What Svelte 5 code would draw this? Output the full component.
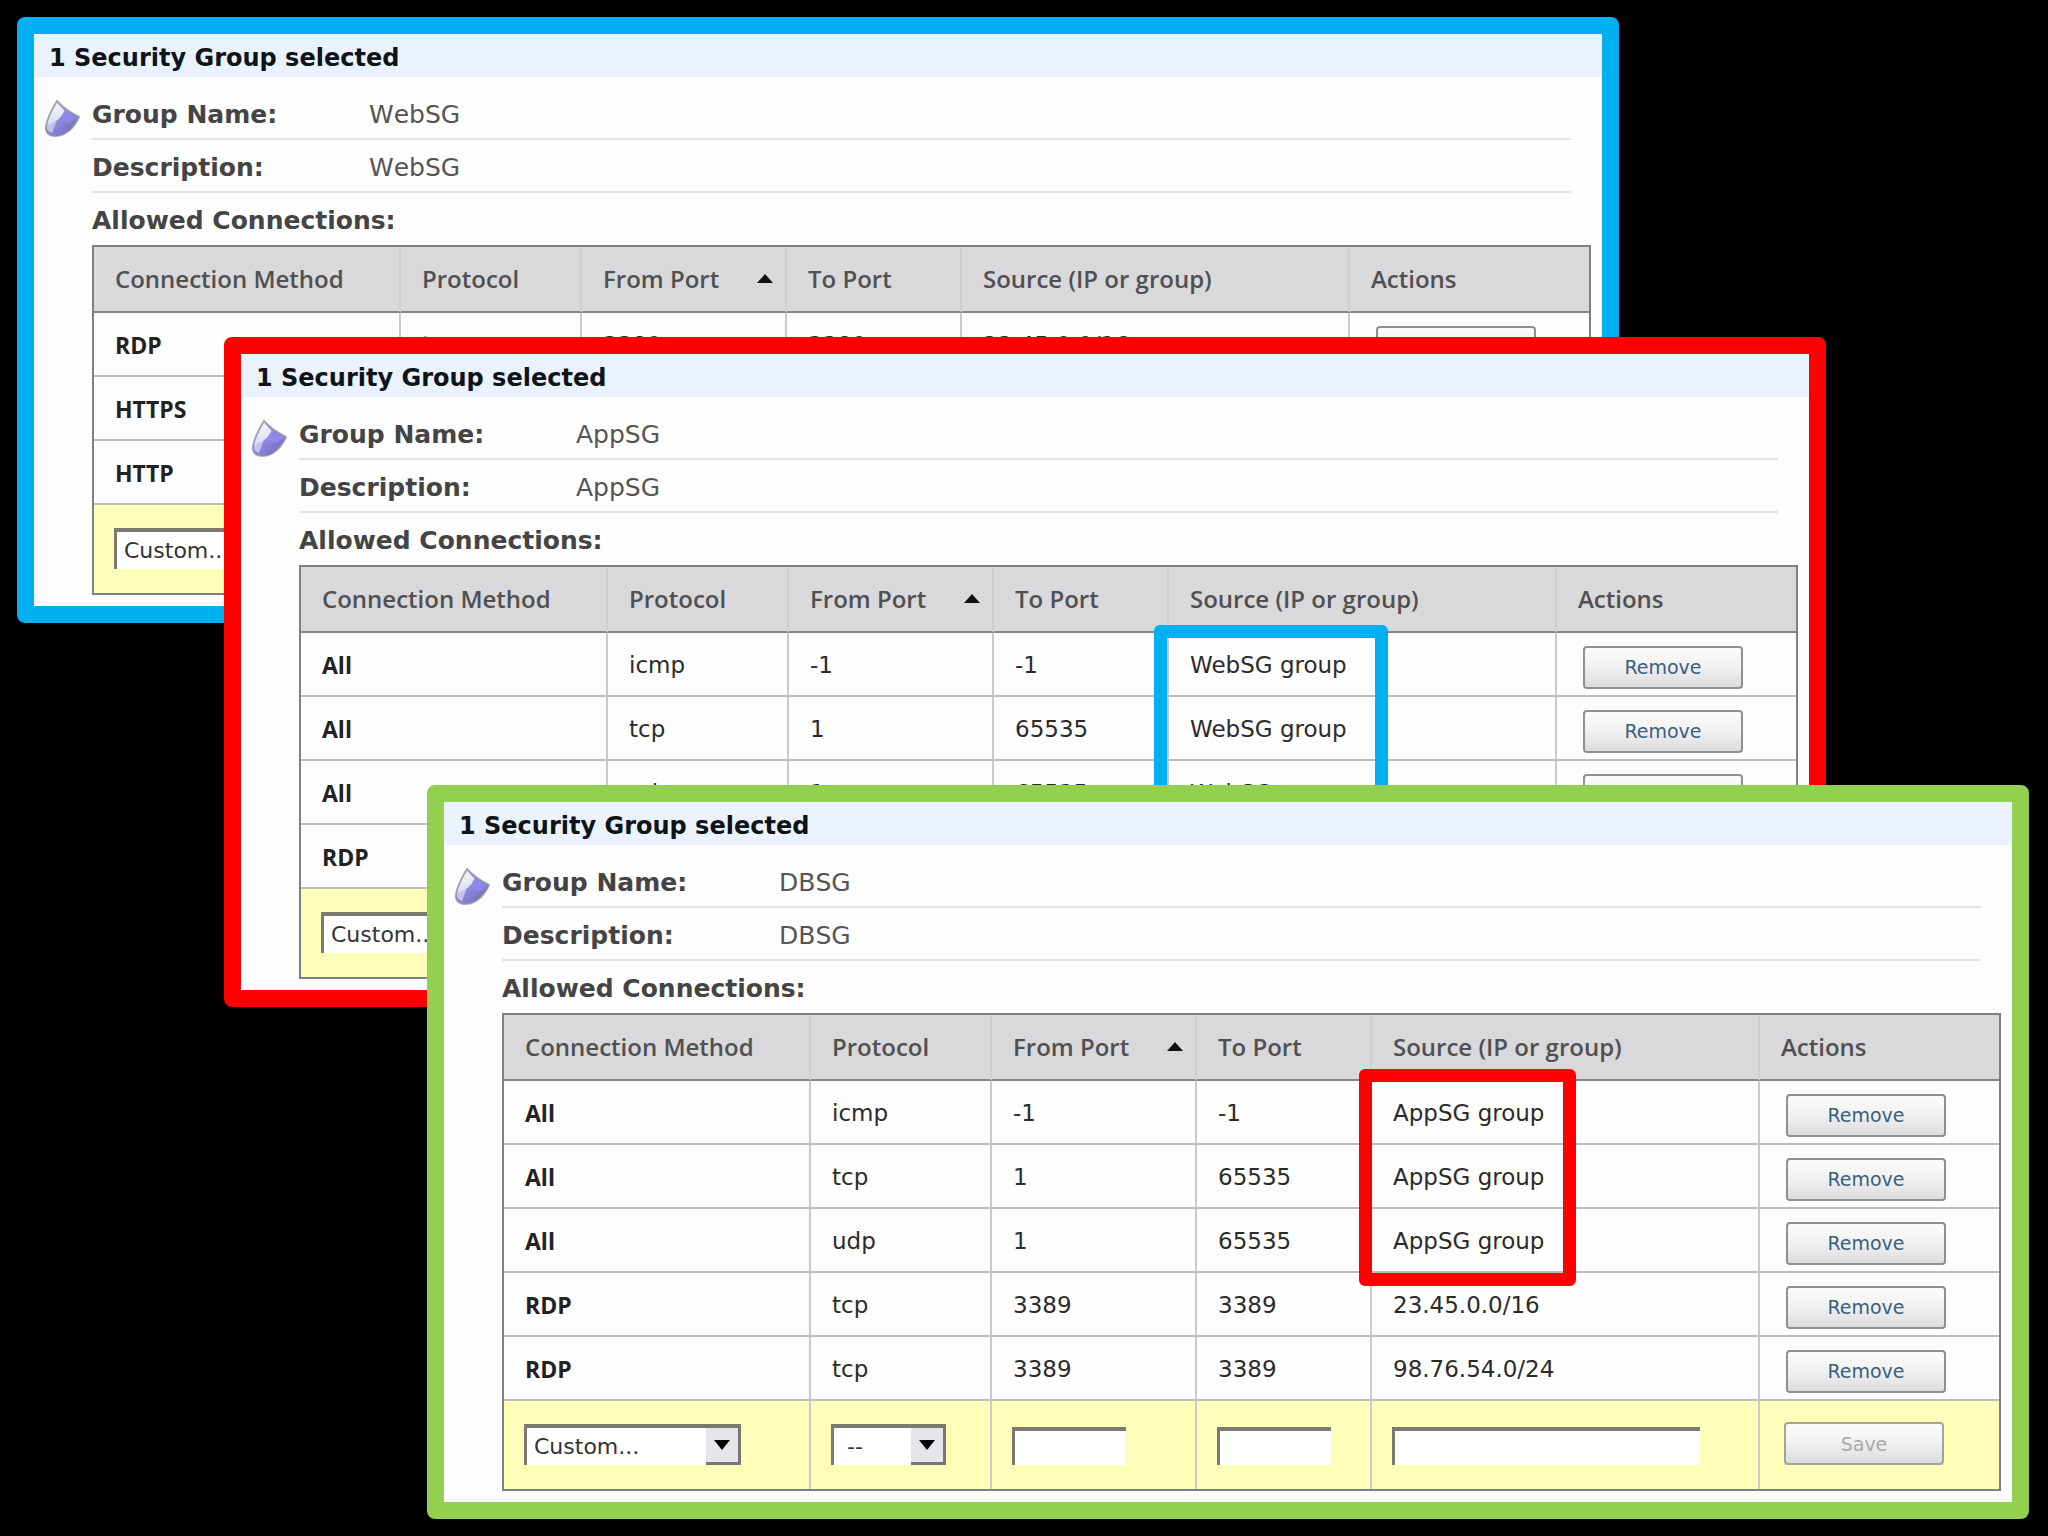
<script lang="ts">
    const columns = [
        { label: "Connection Method", name: "method" },
        { label: "Protocol", name: "protocol" },
        { label: "From Port", name: "from", sorted: true },
        { label: "To Port", name: "to" },
        { label: "Source (IP or group)", name: "source" },
        { label: "Actions", name: "actions" },
    ];

    // left/right/top are the window's place on the canvas
    const groups = [
        {
            name: "WebSG",
            theme: "blue",
            left: 17,
            right: 429,
            top: 17,
            marked: false,
            rules: [
                ["RDP", "tcp", "3389", "3389", "23.45.0.0/16"],
                ["HTTPS", "tcp", "443", "443", "0.0.0.0/0"],
                ["HTTP", "tcp", "80", "80", "0.0.0.0/0"],
            ],
        },
        {
            name: "AppSG",
            theme: "red",
            left: 224,
            right: 222,
            top: 337,
            marked: true,
            rules: [
                ["All", "icmp", "-1", "-1", "WebSG group"],
                ["All", "tcp", "1", "65535", "WebSG group"],
                ["All", "udp", "1", "65535", "WebSG group"],
                ["RDP", "tcp", "3389", "3389", "23.45.0.0/16"],
            ],
        },
        {
            name: "DBSG",
            theme: "green",
            left: 427,
            right: 19,
            top: 785,
            marked: true,
            rules: [
                ["All", "icmp", "-1", "-1", "AppSG group"],
                ["All", "tcp", "1", "65535", "AppSG group"],
                ["All", "udp", "1", "65535", "AppSG group"],
                ["RDP", "tcp", "3389", "3389", "23.45.0.0/16"],
                ["RDP", "tcp", "3389", "3389", "98.76.54.0/24"],
            ],
        },
    ];
</script>

{#snippet dropdown(label: string, value: string, size: string)}
    <span class={`dropdown ${size}`}>
        <select aria-label={label}>
            <option>{value}</option>
        </select>
        <span class="dropdown-arrow">
            <svg width="16" height="10" viewBox="0 0 16 10" aria-hidden="true">
                <path d="M0 0H16L8 10Z" fill="#000" />
            </svg>
        </span>
    </span>
{/snippet}

<main class="canvas">
    {#each groups as group}
        <section
            class={`window ${group.theme}`}
            style={`left: ${group.left}px; right: ${group.right}px; top: ${group.top}px`}
        >
            <h2>1 Security Group selected</h2>
            <div class="body">
                <svg class="shield" width="36" height="38" viewBox="0 0 36 38" aria-hidden="true">
                    <defs>
                        <linearGradient id={`fill-${group.name}`} x1="0" y1="0" x2="1" y2="1">
                            <stop offset="0" stop-color="#b5b1ee" />
                            <stop offset="0.5" stop-color="#8d86dc" />
                            <stop offset="1" stop-color="#6a65a8" />
                        </linearGradient>
                        <linearGradient id={`shine-${group.name}`} x1="0" y1="0" x2="0" y2="1">
                            <stop offset="0" stop-color="#f4f4f6" />
                            <stop offset="1" stop-color="#dddcf5" />
                        </linearGradient>
                    </defs>
                    <path
                        d="M13 2C19 9 27 14 35 18C31 27 23 37 12 37C4 37 1 33 2 27C4 17 8 10 13 2Z"
                        fill={`url(#fill-${group.name})`}
                    />
                    <path d="M13 3C16 7 18 9 21 12C19 17 13 22 3 27C4 18 8 11 13 3Z" fill={`url(#shine-${group.name})`} />
                    <path d="M3 27L13 21L8 34Q2 32 3 27Z" fill="#c4c1ea" />
                    <path d="M21 11C25 14 30 17 34 18L25 24L15 21Z" fill="#8f88ea" />
                    <path
                        d="M13 2C19 9 27 14 35 18C31 27 23 37 12 37C4 37 1 33 2 27C4 17 8 10 13 2Z"
                        fill="none"
                        stroke="#8c8c9c"
                        stroke-width="2"
                        stroke-opacity="0.7"
                    />
                </svg>
                <div class="details">
                    <dl>
                        <div class="field">
                            <dt>Group Name:</dt>
                            <dd>{group.name}</dd>
                        </div>
                        <div class="field">
                            <dt>Description:</dt>
                            <dd>{group.name}</dd>
                        </div>
                    </dl>
                    <h3>Allowed Connections:</h3>
                    <table>
                        <colgroup>
                            {#each columns as column}
                                <col class={column.name} />
                            {/each}
                        </colgroup>
                        <thead>
                            <tr>
                                {#each columns as column}
                                    <th scope="col">
                                        {#if column.sorted}
                                            <span class="sortable">
                                                {column.label}
                                                <svg width="16" height="9" viewBox="0 0 16 9" aria-hidden="true">
                                                    <path d="M0 9L8 0L16 9Z" fill="#111" />
                                                </svg>
                                            </span>
                                        {:else}
                                            {column.label}
                                        {/if}
                                    </th>
                                {/each}
                            </tr>
                        </thead>
                        <tbody>
                            {#each group.rules as [method, protocol, from, to, source]}
                                <tr>
                                    <th scope="row">{method}</th>
                                    <td>{protocol}</td>
                                    <td>{from}</td>
                                    <td>{to}</td>
                                    <td>{source}</td>
                                    <td class="action"><button type="button">Remove</button></td>
                                </tr>
                            {/each}
                            <tr class="new-rule">
                                <td>{@render dropdown("Connection Method", "Custom...", "wide")}</td>
                                <td>{@render dropdown("Protocol", "--", "narrow")}</td>
                                <td><input type="text" aria-label="From Port" /></td>
                                <td><input type="text" aria-label="To Port" /></td>
                                <td><input class="long" type="text" aria-label="Source (IP or group)" /></td>
                                <td class="action"><button type="button" disabled>Save</button></td>
                            </tr>
                        </tbody>
                    </table>
                </div>
            </div>
            {#if group.marked}
                <div class="marker"></div>
            {/if}
        </section>
    {/each}
</main>

<style>
    :global(body) {
        background: #000;
    }

    .canvas {
        position: relative;
        min-height: 100vh;
        overflow: hidden;
        font-family: "DejaVu Sans", Verdana, sans-serif;
        font-size: 23px;
        color: #2b2b2b;
    }

    .window {
        position: absolute;
        border: 17px solid;
        border-radius: 8px;
        background: #fefdfe;
    }

    .window.blue {
        border-color: #00b0f0;
    }

    .window.red {
        border-color: #ff0000;
    }

    .window.green {
        border-color: #92d050;
    }

    h2 {
        margin: 0;
        padding: 5px 15px 0;
        background: #eaf2fd;
        font-size: 24px;
        line-height: 38px;
        color: #101318;
    }

    .body {
        display: flex;
        gap: 12px;
        padding: 10px 11px 11px 10px;
    }

    .shield {
        flex: none;
        margin-top: 12px;
    }

    .details {
        flex: 1;
        min-width: 0;
    }

    dl {
        margin: 0 20px 0 0;
    }

    .field {
        display: flex;
        padding-top: 5px;
        border-bottom: 2px solid #e4e3e5;
        font-size: 25px;
        line-height: 46px;
    }

    dt {
        width: 277px;
        font-weight: 700;
        color: #444;
    }

    dd {
        margin: 0;
        font-kerning: none;
        color: #555;
    }

    h3 {
        margin: 0;
        padding-top: 4px;
        font-size: 25px;
        line-height: 48px;
        color: #444;
    }

    table {
        width: 100%;
        table-layout: fixed;
        border: 2px solid #808083;
        border-collapse: separate;
        border-spacing: 0;
    }

    col.method {
        width: 307px;
    }

    col.protocol {
        width: 181px;
    }

    col.from {
        width: 205px;
    }

    col.to {
        width: 175px;
    }

    col.source {
        width: 388px;
    }

    th,
    td {
        box-sizing: border-box;
        height: 64px;
        padding: 2px 0 0 21px;
        border-right: 2px solid #cbc9ce;
        border-bottom: 2px solid #bdbcbf;
        text-align: left;
        white-space: nowrap;
    }

    th:last-child,
    td:last-child {
        border-right: 0;
    }

    th {
        font-family: "Open Sans", sans-serif;
        font-weight: 700;
        color: #222;
    }

    thead th {
        height: 66px;
        padding-top: 0;
        padding-bottom: 2px;
        border-right-color: #cfcdd0;
        border-bottom-color: #858488;
        background: #d9d8da;
        font-size: 24px;
        font-weight: 600;
        color: #505052;
    }

    .sortable {
        display: flex;
        align-items: center;
        justify-content: space-between;
        padding-right: 12px;
    }

    .action {
        padding: 6px 0 0 26px;
    }

    .new-rule td {
        height: 88px;
        padding: 0 0 24px 20px;
        border-bottom: 0;
        background: #fffdb8;
        vertical-align: bottom;
    }

    .new-rule .action {
        padding-left: 24px;
    }

    button {
        display: block;
        width: 160px;
        height: 43px;
        padding: 0;
        border: 2px solid #8f8f92;
        border-radius: 4px;
        background: linear-gradient(#fcfcfc, #f0f0f1 50%, #dddddf);
        font-family: inherit;
        font-size: 19px;
        color: #36607f;
    }

    button:disabled {
        border-color: #a3a396;
        color: #a9a9a9;
    }

    .dropdown {
        display: grid;
        height: 41px;
    }

    .dropdown.wide {
        width: 217px;
    }

    .dropdown.narrow {
        width: 115px;
    }

    select,
    .dropdown-arrow {
        grid-area: 1 / 1;
    }

    select {
        appearance: none;
        padding: 0 0 0 7px;
        border: 0 solid #7c7a70;
        border-width: 4px 3px 0;
        border-radius: 0;
        background: #fff;
        font-family: inherit;
        font-size: 22px;
        color: #333;
    }

    .narrow select {
        padding-left: 13px;
    }

    .dropdown-arrow {
        display: flex;
        align-items: center;
        justify-content: center;
        justify-self: end;
        box-sizing: border-box;
        width: 35px;
        margin-top: 4px;
        border-right: 3px solid #77767a;
        border-bottom: 3px solid #77767a;
        background: #e6e5ea;
        pointer-events: none;
    }

    input {
        display: block;
        box-sizing: border-box;
        width: 114px;
        height: 38px;
        padding: 0 8px;
        border: 0 solid #7c7a70;
        border-width: 4px 0 0 3px;
        border-radius: 0;
        background: #fff;
        font-family: inherit;
        font-size: 22px;
    }

    input.long {
        width: 308px;
    }

    /* callout drawn over the source column */
    .marker {
        position: absolute;
        box-sizing: border-box;
        left: 915px;
        top: 267px;
        width: 217px;
        height: 217px;
        border: 13px solid #ff0000;
        border-radius: 6px;
    }

    .red .marker {
        left: 913px;
        top: 271px;
        width: 234px;
        border-color: #00b0f0;
    }
</style>
